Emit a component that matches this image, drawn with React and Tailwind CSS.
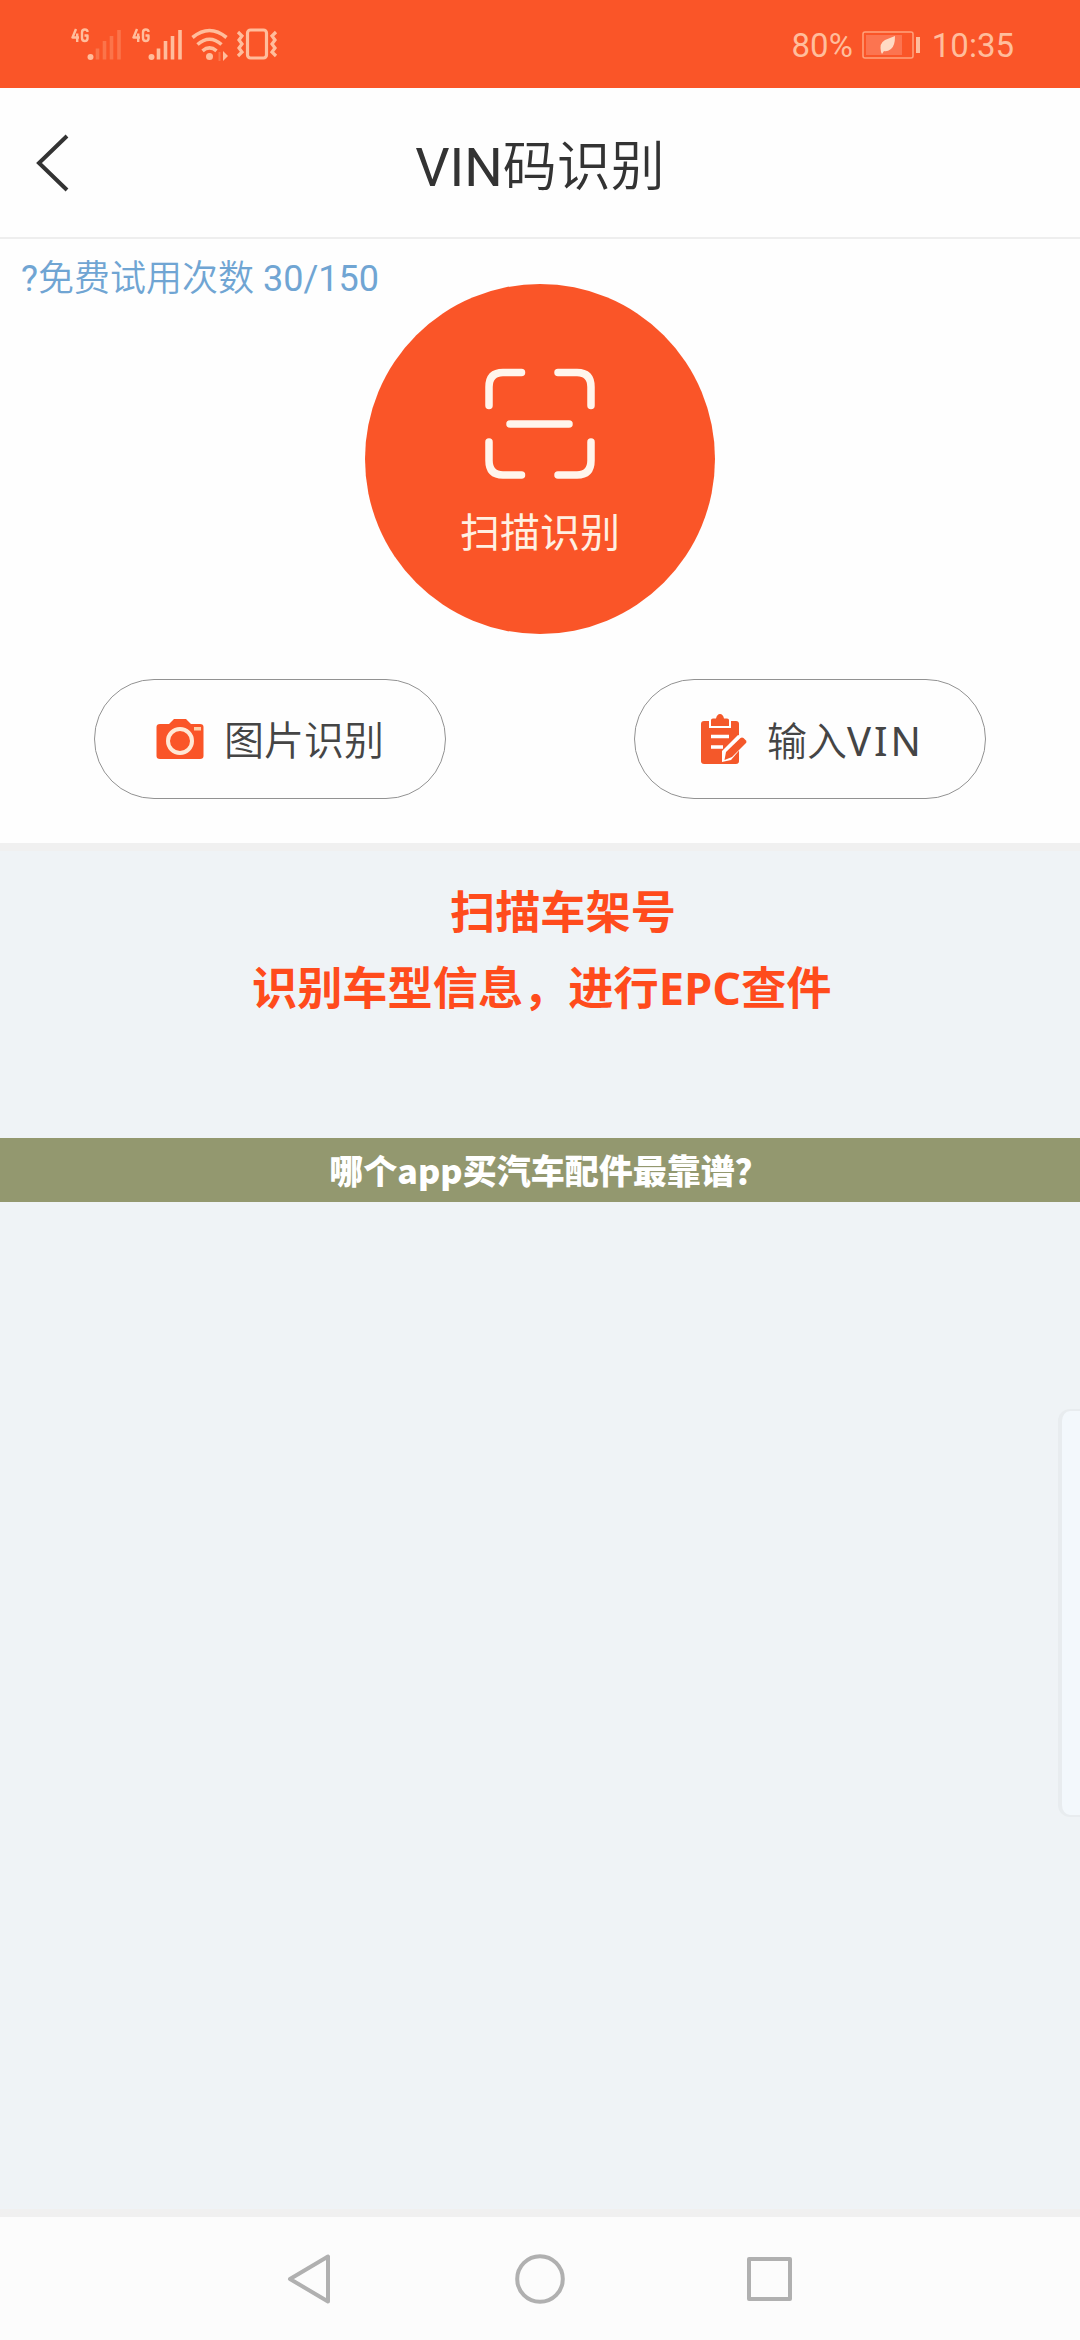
function SignalBars({ className, strong }) {
  const o = strong ? 1 : 0.3;
  return (
    <svg className={className} width="52" height="34" viewBox="0 0 52 34" fill="none" stroke="#ffbd9c" strokeWidth="3.6">
      <g strokeWidth="2.4" strokeLinejoin="round">
        <path d="M5 2L1.5 10.5H8M6.2 6.5V15" />
        <path d="M16.5 5Q16.500 2.500 13.800 2.500Q11 2.500 11 5.500V11Q11 14 13.800 14Q16.500 14 16.500 11.500V8.500H13.500" />
      </g>
      <circle cx="19.500" cy="30" r="3" fill="#ffbd9c" stroke="none" />
      <path opacity={o} d="M26.500 21.500V32.500M33.500 14V32.500M40.500 9V32.500M48 3V32.500" />
    </svg>
  );
}

function WifiIcon({ className }) {
  return (
    <svg className={className} width="38" height="34" viewBox="0 0 38 34" fill="none" stroke="#ffbd9c" strokeWidth="3.6">
      <path d="M1.500 9.500Q18.500-4.500 35.500 9.500M6.500 16.500Q18.500 6 30.500 16.500M11.500 22.800Q18.500 17 25.500 22.800" />
      <circle cx="18.500" cy="28.500" r="3.500" fill="#ffbd9c" stroke="none" />
      <path d="M32 23L37 28L32 33Z" fill="#ffbd9c" stroke="none" />
      <path d="M28.500 24V33" opacity=".3" strokeWidth="2" />
    </svg>
  );
}

function VibrateIcon({ className }) {
  return (
    <svg className={className} width="42" height="34" viewBox="0 0 42 34" fill="none" stroke="#ffbd9c" strokeWidth="3.2">
      <rect x="11.500" y="3" width="19" height="28" rx="3" />
      <path d="M2 5L6 9L3 13L6 17L3 21L6 25L2 29M40 5L36 9L39 13L36 17L39 21L36 25L40 29" />
    </svg>
  );
}

function BatteryIcon({ className }) {
  return (
    <svg className={className} width="60" height="28" viewBox="0 0 60 28">
      <rect x="1" y="1" width="50" height="26" rx="2" fill="none" stroke="#ffa27c" strokeWidth="1.5" />
      <rect x="4" y="4" width="36" height="20" fill="#fc7450" />
      <path d="M19 21Q17 12 23 9Q28 7 33 5Q33 15 29 18Q25 21 22 20L20 23Z" fill="#ffdac4" />
      <rect x="54" y="6" width="4" height="16" fill="#ffbd9c" />
    </svg>
  );
}

function StatusBar() {
  return (
    <div className="flex h-[88px] items-start bg-[#fa5528] font-[Roboto,sans-serif] text-[#ffbd9c]">
      <SignalBars className="ml-[71px] mt-[27px]" />
      <SignalBars className="ml-[9px] mt-[27px]" strong />
      <WifiIcon className="ml-[7px] mt-[28px]" />
      <VibrateIcon className="ml-[7px] mt-[27px]" />
      <div className="ml-auto mr-[66px] mt-[26px] flex h-10 text-[33px] leading-10">
        <span>80%</span>
        <BatteryIcon className="ml-[9px] mr-[10px] mt-[5px]" />
        <span>10:35</span>
      </div>
    </div>
  );
}

function Header() {
  return (
    <header className="flex h-[151px] items-center border-b-2 border-[#eeeeee]">
      <svg className="ml-[34px]" width="38" height="60" viewBox="0 0 38 60" fill="none" stroke="#333333" strokeWidth="4">
        <path d="M33 3L5 30L33 57" />
      </svg>
      <h1 className="mr-[72px] flex-1 pt-[10px] text-center text-[54px] font-[350] leading-[60px] text-[#333333]">
        <span className="font-normal">VIN</span>码识别
      </h1>
    </header>
  );
}

function CameraIcon() {
  return (
    <svg width="48" height="42" viewBox="0 0 48 42">
      <path d="M4 6H13L18 1H30L35 6H44Q47.500 6 47.500 9V38Q47.500 41 44 41H4Q.500 41 .500 38V9Q.500 6 4 6Z" fill="#fa5528" />
      <circle cx="24" cy="23" r="12" fill="none" stroke="#ffe9d6" strokeWidth="4" />
      <rect x="38" y="9" width="7" height="3.500" fill="#ffd0a8" />
    </svg>
  );
}

function ClipboardIcon() {
  return (
    <svg width="47" height="50" viewBox="0 0 47 50">
      <path d="M4 7H36Q39 7 39 10V47Q39 50 36 50H4Q1 50 1 47V10Q1 7 4 7Z" fill="#f4582a" />
      <path d="M9 5H31V14H9Z" fill="#fff" />
      <path d="M11 12V6Q11 4.500 13 4.500H16Q17 0 20 0Q23 0 24 4.500H27Q29 4.500 29 6V12Z" fill="#f4582a" />
      <path d="M11 22.500H29M11 33H23" stroke="#fff" strokeWidth="3.500" />
      <path d="M22 37L38 21L49 25L31 46L22 48Z" fill="#fff" />
      <path d="M26 38L40.500 24Q42 23 43.500 24L46 26.500Q47 28 46 29L32 43L24.500 46Z" fill="#f4582a" />
    </svg>
  );
}

function PillButton({ icon, children, className }) {
  return (
    <button className={`flex h-[120px] w-[352px] items-center rounded-full border-[1.5px] border-[#929292] text-[40px] font-[350] leading-[48px] text-[#454545] ${className}`}>
      {icon}
      <span className="ml-5 whitespace-nowrap pt-[6px]">{children}</span>
    </button>
  );
}

function ScanButton() {
  return (
    <button className="mx-auto mt-[-19px] flex h-[350px] w-[350px] flex-col items-center rounded-full bg-[#fa5528] text-[#fff0e2]">
      <svg className="mt-[84px]" width="112" height="112" viewBox="0 0 112 112" fill="none" stroke="#fff5ec" strokeWidth="7.500" strokeLinecap="round">
        <path d="M37.500 4.500H19Q5 4.500 5 19V37.500M74 4.500H93Q107 4.500 107 19V37.500M5 74V92.500Q5 107 19 107H37.500M107 74V92.500Q107 107 93 107H74M26 56H85" />
      </svg>
      <span className="mt-[30px] text-[40px] font-normal leading-[48px]">扫描识别</span>
    </button>
  );
}

function NavBar() {
  return (
    <nav className="flex h-[123px] items-start bg-[#fcfcfc] pt-9">
      <svg className="ml-[287px]" width="44" height="52" viewBox="0 0 44 52" fill="none" stroke="#b0b0b0" strokeWidth="4" strokeLinejoin="round">
        <path d="M41 3.500V48.500L3 26Z" />
      </svg>
      <svg className="ml-[183px]" width="52" height="52" viewBox="0 0 52 52" fill="none" stroke="#b0b0b0" strokeWidth="4">
        <circle cx="26" cy="26" r="22.800" />
      </svg>
      <svg className="ml-[180px]" width="46" height="52" viewBox="0 0 46 52" fill="none" stroke="#b0b0b0" strokeWidth="4" strokeLinejoin="round">
        <rect x="3" y="6" width="41" height="40" />
      </svg>
    </nav>
  );
}

export default function App() {
  return (
    <div className="relative flex h-[2340px] w-[1080px] flex-col overflow-hidden bg-[#fefefe] font-[Roboto,'Noto_Sans_CJK_SC',sans-serif]">
      <StatusBar />
      <Header />
      <section className="flex h-[604px] flex-col">
        <p className="ml-[21px] mt-4 h-12 whitespace-nowrap text-[36px] font-[350] leading-[48px] text-[#70a5d3]">
          <span className="font-normal">?</span>免费试用次数<span className="font-normal"> 30/150</span>
        </p>
        <ScanButton />
        <div className="mt-[45px] flex justify-between pl-[94px] pr-[94px]">
          <PillButton className="pl-[61px]" icon={<CameraIcon />}>图片识别</PillButton>
          <PillButton className="pl-[65px]" icon={<ClipboardIcon />}>
            输入<span className="font-['Noto_Sans',sans-serif] font-normal tracking-[3px]">VIN</span>
          </PillButton>
        </div>
      </section>
      <main className="flex flex-1 flex-col border-y-[8px] border-[#f0f0f0] bg-[#eff3f6]">
        <div className="mt-[23px] h-[153px] font-['Open_Sans','Noto_Sans_CJK_SC',sans-serif] text-[45.2px] font-bold leading-[76px] text-[#ff4b1c]">
          <p className="pl-[450px]">扫描车架号</p>
          <p className="whitespace-nowrap pl-[252px]">识别车型信息，进行EPC查件</p>
        </div>
        <div className="mt-[111px] h-16 bg-[#93986f] pl-[18px] text-center font-['Noto_Sans_CJK_SC',sans-serif] text-[34px] font-black leading-[64px] text-white">
          哪个app买汽车配件最靠谱？
        </div>
        <div className="ml-auto mt-[207px] h-[408px] w-[22px] rounded-l-xl border-y-2 border-l-4 border-[#e8ecef] bg-[#f3f8fc]" />
      </main>
      <NavBar />
    </div>
  );
}
